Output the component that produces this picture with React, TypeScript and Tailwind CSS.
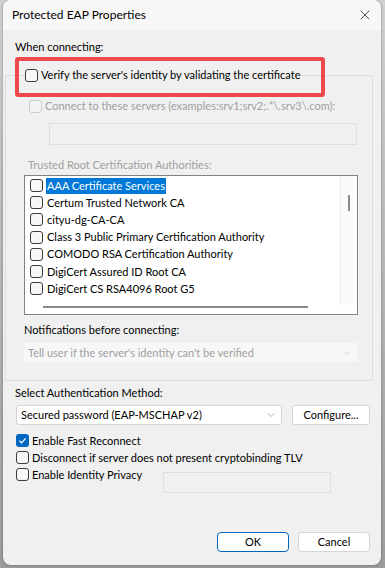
import { ChevronDown, X } from "lucide-react";

const font = { fontFamily: 'Lato, "Liberation Sans", sans-serif' };

function Box({ checked = false, disabled = false }: { checked?: boolean; disabled?: boolean }) {
  if (checked) {
    return (
      <span className="flex h-[13px] w-[13px] shrink-0 items-center justify-center rounded-[3px] bg-[#0067c0]">
        <svg width="9" height="9" viewBox="0 0 9 9" fill="none">
          <path d="M1.5 4.8 L3.6 6.8 L7.6 2.4" stroke="white" strokeWidth="1.2" />
        </svg>
      </span>
    );
  }
  return (
    <span
      className={
        "h-[13px] w-[13px] shrink-0 rounded-[3px] border " +
        (disabled ? "border-[#cdcdcd] bg-[#f3f3f3]" : "border-[#3c3c3c] bg-[#f7f7f7]")
      }
    />
  );
}

const certs = [
  "AAA Certificate Services",
  "Certum Trusted Network CA",
  "cityu-dg-CA-CA",
  "Class 3 Public Primary Certification Authority",
  "COMODO RSA Certification Authority",
  "DigiCert Assured ID Root CA",
  "DigiCert CS RSA4096 Root G5",
];

export default function App() {
  return (
    <div
      className="h-[568px] w-[385px] overflow-hidden bg-gradient-to-b from-[#d2d2d2] to-[#9c9c9c] pl-[3px] text-[11px] leading-[16px] text-black"
      style={font}
    >
      <div className="relative flex h-[565px] w-[378px] flex-col overflow-hidden rounded-[8px] bg-[#f0f0f0] shadow-[0_0_3px_rgba(0,0,0,0.35)]">
        {/* title bar */}
        <div className="flex h-[30px] items-center justify-between bg-[#f7f7f7] pl-[9px] pr-[8px]">
          <span className="text-[12px]">Protected EAP Properties</span>
          <X size={16} strokeWidth={1.2} className="text-[#222]" />
        </div>

        <div className="mt-[9px] pl-[12px]">When connecting:</div>

        {/* group box */}
        <fieldset className="ml-[2px] mt-[12px] h-[314px] w-[368px] border border-[#dcdcdc] pl-[20px]">
          <legend className="ml-[-1px] flex items-center gap-[3px] pr-[2px]">
            <Box />
            <span>Verify the server's identity by validating the certificate</span>
          </legend>

          <div className="ml-[3px] mt-[15px] flex h-[16px] items-center gap-[3px] text-[#a0a0a0]">
            <Box disabled />
            <span>Connect to these servers (examples:srv1;srv2;.*\.srv3\.com):</span>
          </div>

          <div className="ml-[23px] mt-[9px] h-[22px] w-[308px] border border-[#dedede] bg-[#f0f0f0]" />

          <div className="ml-[2px] mt-[12px] text-[#a0a0a0]">Trusted Root Certification Authorities:</div>

          <div className="ml-[-2px] mt-[2px] flex h-[140px] w-[334px] flex-col border border-[#828282] bg-white">
            <div className="flex flex-1">
              <div className="flex flex-1 flex-col pl-[5px] pt-[1px]">
                {certs.map((c, i) => (
                  <div key={c} className="flex h-[17.2px] items-center gap-[3px]">
                    <Box />
                    <span className={i === 0 ? "bg-[#0078d7] px-[1px] text-white" : "px-[1px]"}>{c}</span>
                  </div>
                ))}
              </div>
              <div className="w-[17px] border-l border-[#ececec] bg-[#fafafa] pt-[19px]">
                <div className="ml-[7px] h-[16px] w-[2px] bg-[#8a8a8a]" />
              </div>
            </div>
            <div className="flex h-[9px] items-start pt-[1px]">
              <div className="ml-[18px] h-[2px] w-[265px] bg-[#8a8a8a]" />
            </div>
          </div>

          <div className="ml-[-2px] mt-[7px]">Notifications before connecting:</div>

          <div className="ml-[-2px] mt-[5px] flex h-[19px] w-[334px] items-center justify-between bg-[#f7f7f7] pl-[4px] pr-[5px] text-[#a0a0a0]">
            <span>Tell user if the server's identity can't be verified</span>
            <ChevronDown size={12} strokeWidth={1} className="text-[#bdbdbd]" />
          </div>
        </fieldset>

        <div className="mt-[4px] pl-[12px]">Select Authentication Method:</div>

        <div className="ml-[13px] mt-[4px] flex gap-[10px]">
          <div className="flex h-[20px] w-[266px] items-center justify-between rounded-[3px] border border-[#d5d5d5] bg-white pl-[4px] pr-[4px]">
            <span>Secured password (EAP-MSCHAP v2)</span>
            <ChevronDown size={12} strokeWidth={1} className="text-[#666]" />
          </div>
          <div className="flex h-[20px] w-[78px] items-center justify-center rounded-[3px] border border-[#d5d5d5] bg-white">
            Configure...
          </div>
        </div>

        <div className="ml-[13px] mt-[9px] flex flex-col gap-[4px]">
          <div className="flex h-[13px] items-center gap-[3px]">
            <Box checked />
            <span>Enable Fast Reconnect</span>
          </div>
          <div className="flex h-[13px] items-center gap-[3px]">
            <Box />
            <span>Disconnect if server does not present cryptobinding TLV</span>
          </div>
          <div className="flex h-[13px] items-center gap-[3px]">
            <Box />
            <span className="w-[128px]">Enable Identity Privacy</span>
            <div className="mt-[15px] h-[21px] w-[168px] border border-[#dedede] bg-[#f0f0f0]" />
          </div>
        </div>

        <div className="mt-auto mb-[13px] flex justify-end gap-[9px] pr-[11px]">
          <div className="flex h-[20px] w-[72px] items-center justify-center rounded-[4px] border border-[#0067c0] bg-white">
            OK
          </div>
          <div className="flex h-[20px] w-[72px] items-center justify-center rounded-[4px] border border-[#d5d5d5] bg-white">
            Cancel
          </div>
        </div>

        {/* red annotation */}
        <div className="absolute left-[12px] top-[57px] h-[40px] w-[310px] rounded-[3px] border-[4px] border-[#ee4a4e]" />
      </div>
    </div>
  );
}
